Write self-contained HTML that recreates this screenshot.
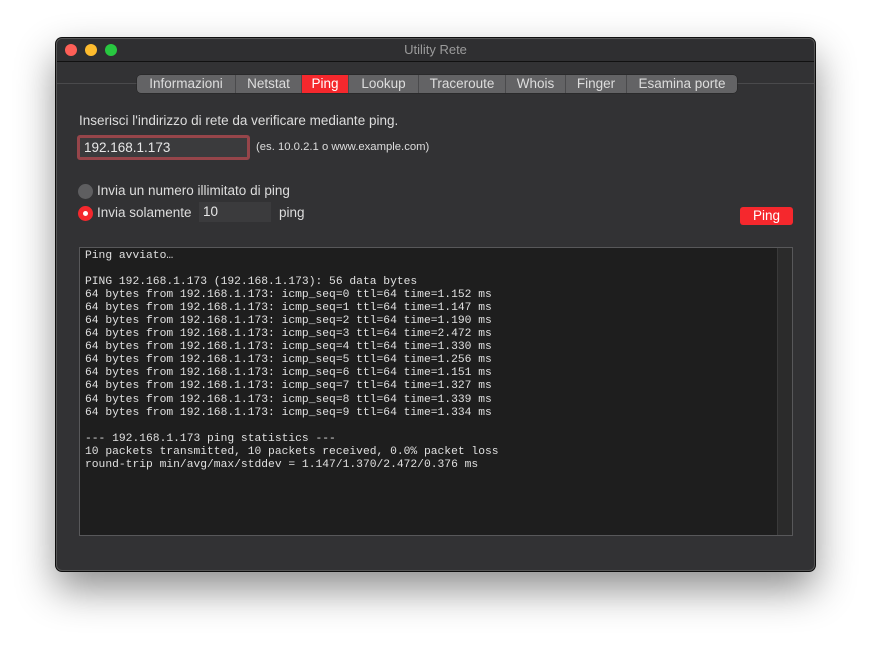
<!DOCTYPE html>
<html><head><style>
*{margin:0;padding:0;box-sizing:border-box}
body{width:871px;height:645px;background:#fff;position:relative;overflow:hidden;font-family:"Liberation Sans",sans-serif}
.win{position:absolute;left:56px;top:38px;width:759px;height:533px;background:#323234;border-radius:6px;border:1px solid #555;box-shadow:0 18px 40px rgba(0,0,0,.45),0 0 0 1px #111;overflow:hidden}
.title{position:absolute;left:0;top:0;right:0;height:23px;background:#2f2f31;border-bottom:1px solid #111;color:#9b9b9b;font-size:13px;text-align:center;line-height:22px}
.dot{position:absolute;top:5px;width:12px;height:12px;border-radius:50%}
.line{position:absolute;left:0;right:0;top:44px;height:1px;background:#4a4a4c}
.tabs{position:absolute;left:80px;top:36px;height:18px;display:flex;border-radius:4px;overflow:hidden;background:#636365;box-shadow:0 0 0 .5px #222}
.tabs div{color:#ddd;font-size:13.5px;line-height:18px;text-align:center;border-right:1px solid #4a4a4c;white-space:nowrap}
.tabs div:last-child{border:none}
.t{position:absolute;color:#ddd;font-size:13.5px;white-space:nowrap}
.field{position:absolute;background:#3b3b3d;color:#e8e8e8;font-size:13.5px}
.out{position:absolute;left:22px;top:208px;width:714px;height:289px;background:#1e1e1e;border:1px solid #58585a}
.out pre{font-family:"Liberation Mono",monospace;font-size:11.3px;line-height:13.05px;color:#e0e0e0;padding:2px 0 0 5px}
.sb{position:absolute;right:0;top:0;width:15px;height:100%;background:#2b2b2b;border-left:1px solid #3a3a3a}
</style></head><body>
<div class="win">
<div class="title">Utility Rete</div>
<div class="dot" style="left:8px;background:#fe5f57"></div>
<div class="dot" style="left:28px;background:#febc2e"></div>
<div class="dot" style="left:48px;background:#28c840"></div>
<div class="line"></div>
<div class="tabs">
<div style="width:99px">Informazioni</div>
<div style="width:66px">Netstat</div>
<div style="width:47px;background:#f5282d;color:#fff">Ping</div>
<div style="width:70px">Lookup</div>
<div style="width:87px">Traceroute</div>
<div style="width:60px">Whois</div>
<div style="width:61px">Finger</div>
<div style="width:110px">Esamina porte</div>
</div>
<div class="t" style="left:22px;top:74px">Inserisci l'indirizzo di rete da verificare mediante ping.</div>
<div class="field" style="left:20px;top:96px;width:173px;height:25px;border:3px solid #96454a;border-radius:3px;padding:2px 0 0 4px">192.168.1.173</div>
<div class="t" style="left:199px;top:102px;font-size:11.3px">(es. 10.0.2.1 o www.example.com)</div>
<div style="position:absolute;left:21px;top:145px;width:15px;height:15px;border-radius:50%;background:#5e5e60"></div>
<div class="t" style="left:40px;top:144px">Invia un numero illimitato di ping</div>
<div style="position:absolute;left:21px;top:167px;width:15px;height:15px;border-radius:50%;background:#f5282d"><div style="position:absolute;left:5px;top:5px;width:5px;height:5px;border-radius:50%;background:#fff"></div></div>
<div class="t" style="left:40px;top:166px">Invia solamente</div>
<div class="field" style="left:142px;top:163px;width:72px;height:20px;padding:2px 0 0 4px">10</div>
<div class="t" style="left:222px;top:166px">ping</div>
<div style="position:absolute;left:683px;top:168px;width:53px;height:18px;background:#f5282d;border-radius:3px;color:#fff;font-size:13.5px;text-align:center;line-height:18px">Ping</div>
<div class="out"><div class="sb"></div><pre>Ping avviato…

PING 192.168.1.173 (192.168.1.173): 56 data bytes
64 bytes from 192.168.1.173: icmp_seq=0 ttl=64 time=1.152 ms
64 bytes from 192.168.1.173: icmp_seq=1 ttl=64 time=1.147 ms
64 bytes from 192.168.1.173: icmp_seq=2 ttl=64 time=1.190 ms
64 bytes from 192.168.1.173: icmp_seq=3 ttl=64 time=2.472 ms
64 bytes from 192.168.1.173: icmp_seq=4 ttl=64 time=1.330 ms
64 bytes from 192.168.1.173: icmp_seq=5 ttl=64 time=1.256 ms
64 bytes from 192.168.1.173: icmp_seq=6 ttl=64 time=1.151 ms
64 bytes from 192.168.1.173: icmp_seq=7 ttl=64 time=1.327 ms
64 bytes from 192.168.1.173: icmp_seq=8 ttl=64 time=1.339 ms
64 bytes from 192.168.1.173: icmp_seq=9 ttl=64 time=1.334 ms

--- 192.168.1.173 ping statistics ---
10 packets transmitted, 10 packets received, 0.0% packet loss
round-trip min/avg/max/stddev = 1.147/1.370/2.472/0.376 ms</pre></div>
</div>
</body></html>
